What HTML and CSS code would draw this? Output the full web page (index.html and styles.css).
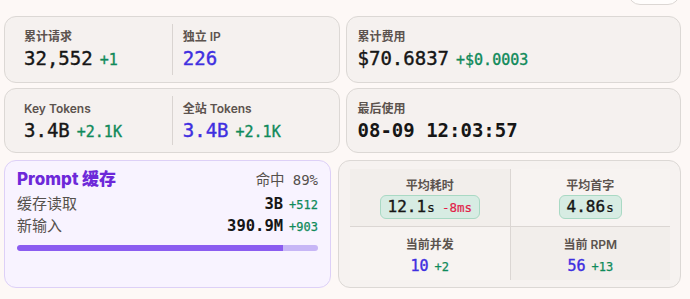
FILE: index.html
```html
<!DOCTYPE html>
<html lang="zh-CN">
<head>
    <meta charset="UTF-8">
    <meta name="viewport" content="width=device-width, initial-scale=1.0">
    <title>用量统计</title>
    <link rel="stylesheet" href="styles.css">
</head>
<body>
    <div class="page">
        <div class="topbar">
            <button class="top-btn" type="button"></button>
        </div>

        <!-- 请求与费用 -->
        <div class="row">
            <div class="card split">
                <div class="cell">
                    <div class="label">累计请求</div>
                    <div class="value">32,552<span class="delta">+1</span></div>
                </div>
                <div class="cell">
                    <div class="label">独立 IP</div>
                    <div class="value blue">226</div>
                </div>
            </div>
            <div class="card">
                <div class="label">累计费用</div>
                <div class="value">$70.6837<span class="delta">+$0.0003</span></div>
            </div>
        </div>

        <!-- Tokens 与最后使用 -->
        <div class="row second">
            <div class="card split">
                <div class="cell">
                    <div class="label">Key Tokens</div>
                    <div class="value">3.4B<span class="delta">+2.1K</span></div>
                </div>
                <div class="cell">
                    <div class="label">全站 Tokens</div>
                    <div class="value blue">3.4B<span class="delta">+2.1K</span></div>
                </div>
            </div>
            <div class="card">
                <div class="label">最后使用</div>
                <div class="value strong">08-09 12:03:57</div>
            </div>
        </div>

        <div class="row bottom">
            <!-- 缓存 -->
            <div class="cache">
                <div class="cache-head">
                    <span class="cache-title">Prompt 缓存</span>
                    <span class="hit">命中 <b>89%</b></span>
                </div>
                <div class="cache-row">
                    <span>缓存读取</span>
                    <span class="cache-val">3B<span class="delta small">+512</span></span>
                </div>
                <div class="cache-row">
                    <span>新输入</span>
                    <span class="cache-val">390.9M<span class="delta small">+903</span></span>
                </div>
                <div class="bar">
                    <div class="bar-fill" style="width: 88.5%"></div>
                </div>
            </div>

            <!-- 性能 -->
            <div class="stats">
                <div class="stats-grid">
                    <div class="stat shade">
                        <div class="label">平均耗时</div>
                        <div class="pill">12.1<span class="unit">s</span><span class="neg">-8ms</span></div>
                    </div>
                    <div class="stat">
                        <div class="label">平均首字</div>
                        <div class="pill">4.86<span class="unit">s</span></div>
                    </div>
                    <div class="stat">
                        <div class="label">当前并发</div>
                        <div class="num">10<span class="delta small">+2</span></div>
                    </div>
                    <div class="stat shade">
                        <div class="label">当前 RPM</div>
                        <div class="num">56<span class="delta small">+13</span></div>
                    </div>
                </div>
            </div>
        </div>
    </div>
</body>
</html>
```

FILE: styles.css
```css
/* Estilos generales */
body {
    margin: 0;
    background-color: #fdf8f6;
    font-family: Inter, "Noto Sans CJK SC", sans-serif;
    color: #1a1a1a;
}

.page {
    padding: 0 9px 0 4px;
    display: flex;
    flex-direction: column;
}

.topbar {
    height: 16px;
    display: flex;
    justify-content: flex-end;
}

.top-btn {
    width: 52px;
    height: 30px;
    margin-top: -25px;
    margin-right: 1px;
    background-color: #fffdfc;
    border: 1px solid #dcd7d4;
    border-radius: 12px;
}

.row {
    display: grid;
    grid-template-columns: 1fr 1fr;
    gap: 6px;
    margin-bottom: 5px;
}

.row.bottom {
    grid-template-columns: 327px 1fr;
    gap: 7px;
    margin-top: 2px;
    margin-bottom: 0;
}

.card {
    background-color: #f5f1ef;
    border: 1px solid #dcd8d5;
    border-radius: 12px;
    padding: 11px 11px 11px;
}

.row.second .card {
    padding-bottom: 9px;
}

.card.split {
    display: grid;
    grid-template-columns: 1fr 1fr;
    padding: 7px 11px;
}

.row.second .card.split {
    padding-bottom: 7px;
}

.cell {
    padding: 4px 8px;
}

.row.second .cell {
    padding-bottom: 2px;
}

.cell + .cell {
    border-left: 1px solid #d9d4d1;
    padding-left: 10px;
}

.label {
    height: 17px;
    font-size: 12px;
    line-height: 17px;
    font-weight: 600;
    color: #5c534e;
    white-space: nowrap;
}

.value {
    display: flex;
    align-items: baseline;
    height: 26px;
    font-family: "DejaVu Sans Mono", monospace;
    font-size: 19px;
    line-height: 26px;
    color: #161616;
    white-space: nowrap;
    -webkit-text-stroke: 0.4px currentColor;
}

.value.strong {
    font-weight: bold;
    -webkit-text-stroke: 0;
}

.blue {
    color: #3f2fe0;
}

.delta {
    font-family: "DejaVu Sans Mono", monospace;
    font-size: 15px;
    font-weight: normal;
    color: #0f8a5a;
    margin-left: 7px;
    -webkit-text-stroke: 0.35px currentColor;
}

.delta.small {
    font-size: 12px;
    margin-left: 6px;
    -webkit-text-stroke: 0.25px currentColor;
}

/* Caché */
.cache {
    background-color: #f8f3ff;
    border: 1px solid #ddd0f7;
    border-radius: 12px;
    padding: 7px 12px;
}

.cache-head {
    display: flex;
    justify-content: space-between;
    align-items: baseline;
    height: 22px;
    line-height: 22px;
    margin-bottom: 3px;
}

.cache-title {
    font-size: 17px;
    font-weight: 800;
    color: #6d28d9;
}

.hit {
    font-size: 14.5px;
    color: #55504c;
}

.hit b {
    font-family: "DejaVu Sans Mono", monospace;
    font-size: 14px;
    font-weight: normal;
    margin-left: 4px;
}

.cache-row {
    display: flex;
    justify-content: space-between;
    align-items: baseline;
    height: 22px;
    font-size: 15px;
    line-height: 22px;
    color: #55504c;
}

.cache-val {
    font-family: "DejaVu Sans Mono", monospace;
    font-size: 15.5px;
    font-weight: bold;
    color: #161616;
}

.bar {
    margin-top: 8px;
    height: 6px;
    border-radius: 3px;
    background-color: #c7b6f6;
    overflow: hidden;
}

.bar-fill {
    height: 100%;
    background-color: #8b5cf0;
    border-radius: 3px 0 0 3px;
}

/* Rendimiento */
.stats {
    background-color: #f6f2f0;
    border: 1px solid #dcd8d5;
    border-radius: 12px;
    padding: 8px 10px 7px 11px;
}

.stats-grid {
    display: grid;
    grid-template-columns: 1fr 1fr;
    grid-template-rows: 57px 53px;
    gap: 1px;
    background-color: #dbd6d3;
}

.stat {
    background-color: #f7f3f1;
    display: flex;
    flex-direction: column;
    align-items: center;
    padding-top: 8px;
}

.stat.shade {
    background-color: #f2eeeb;
}

.stats-grid .stat:nth-child(n+3) {
    padding-top: 9px;
}

.pill {
    margin-top: 1px;
    height: 22px;
    display: flex;
    align-items: baseline;
    padding: 0 7px;
    line-height: 22px;
    background-color: #d7ece3;
    border: 1px solid #a9d9c4;
    border-radius: 6px;
    font-family: "DejaVu Sans Mono", monospace;
    font-size: 16px;
    color: #161616;
    -webkit-text-stroke: 0.4px currentColor;
}

.unit {
    font-size: 13px;
    margin-left: 1px;
    -webkit-text-stroke: 0.2px currentColor;
}

.neg {
    font-size: 12.5px;
    color: #e11d48;
    margin-left: 7px;
    -webkit-text-stroke: 0.2px currentColor;
}

.num {
    display: flex;
    align-items: baseline;
    height: 20px;
    font-family: "DejaVu Sans Mono", monospace;
    font-size: 15px;
    line-height: 20px;
    color: #3f2fe0;
    margin-top: 3px;
    -webkit-text-stroke: 0.4px currentColor;
}
```
